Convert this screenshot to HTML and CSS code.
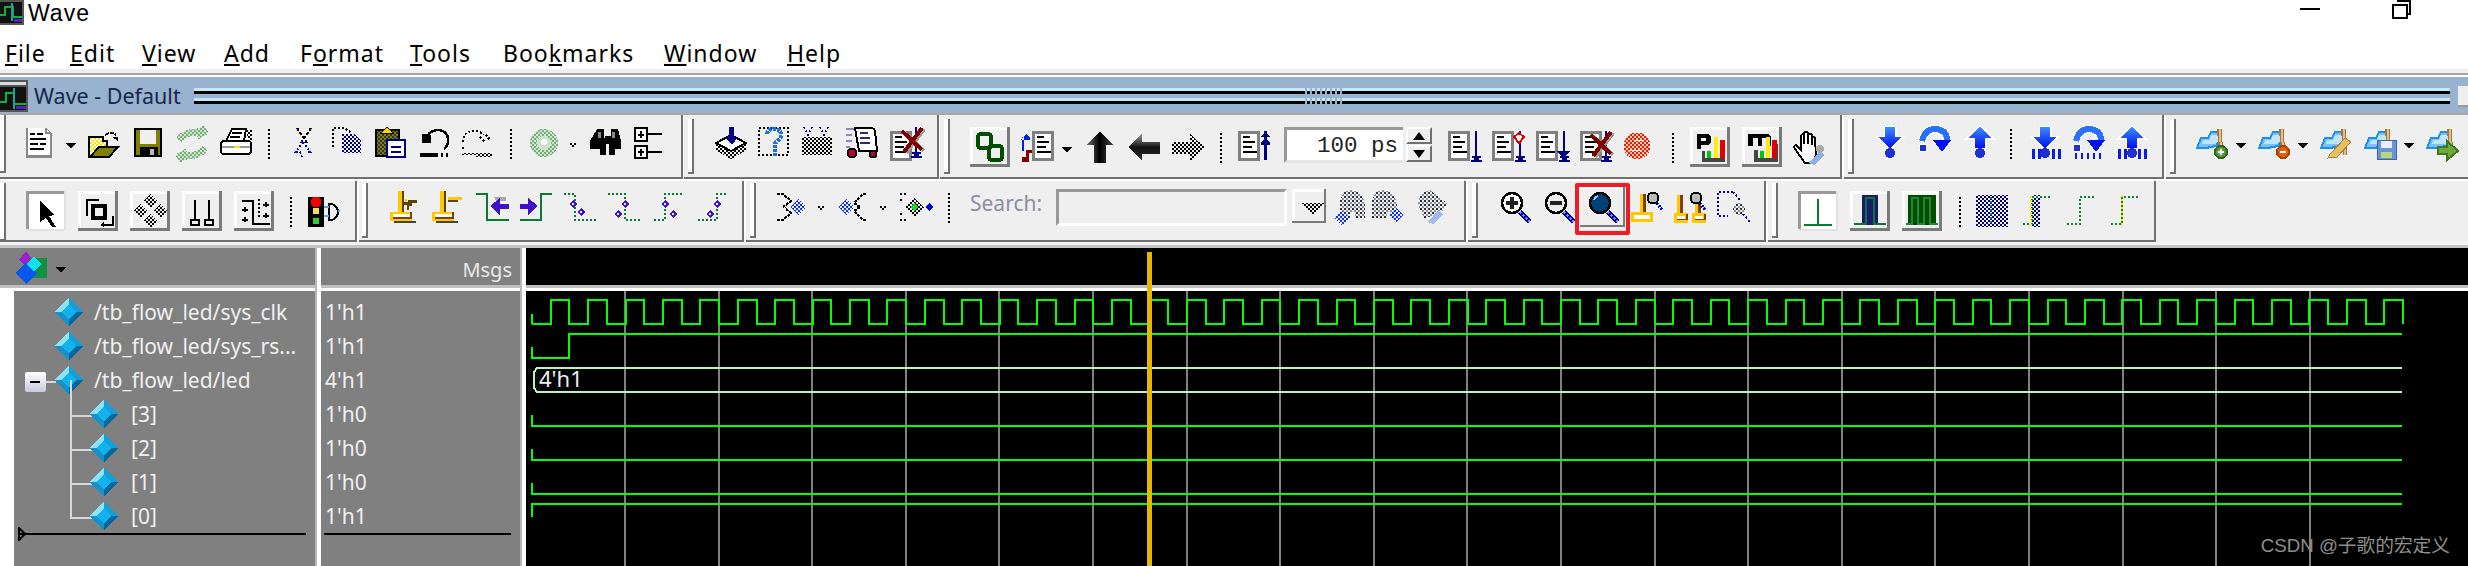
FILE: index.html
```html
<!DOCTYPE html>
<html lang="en">
<head>
    <meta charset="UTF-8">
    <title>Wave</title>
    <link rel="stylesheet" href="styles.css">
</head>
<body>
<svg class="defs" width="0" height="0">
    <defs>
        <pattern id="ck-k" width="4" height="4" patternUnits="userSpaceOnUse"><path d="M0 0h2v2H0zM2 2h2v2H2z" fill="#000"/></pattern>
        <pattern id="ck-g" width="4" height="4" patternUnits="userSpaceOnUse"><path d="M0 0h2v2H0zM2 2h2v2H2z" fill="#78b078"/><path d="M2 0h2v2H2zM0 2h2v2H0z" fill="#d0e4d0"/></pattern>
        <pattern id="ck-n" width="4" height="4" patternUnits="userSpaceOnUse"><path d="M0 0h2v2H0zM2 2h2v2H2z" fill="#000080"/></pattern>
        <pattern id="ck-b" width="4" height="4" patternUnits="userSpaceOnUse"><path d="M0 0h2v2H0zM2 2h2v2H2z" fill="#1030ff"/></pattern>
        <pattern id="ck-r" width="4" height="4" patternUnits="userSpaceOnUse"><path d="M0 0h2v2H0zM2 2h2v2H2z" fill="#e02000"/><path d="M2 0h2v2H2zM0 2h2v2H0z" fill="#f8c8b8"/></pattern>
        <pattern id="ck-y" width="4" height="4" patternUnits="userSpaceOnUse"><rect width="4" height="4" fill="#fff"/><path d="M0 0h2v2H0zM2 2h2v2H2z" fill="#ffe600"/></pattern>
        <pattern id="ck-o" width="4" height="4" patternUnits="userSpaceOnUse"><rect width="4" height="4" fill="#808000"/><path d="M0 0h2v2H0zM2 2h2v2H2z" fill="#333"/></pattern>
        <pattern id="ck-s" width="4" height="4" patternUnits="userSpaceOnUse"><path d="M0 0h2v2H0z" fill="#333"/><path d="M2 2h2v2H2z" fill="#8a94a4"/></pattern>
        <linearGradient id="gr-h"><stop offset="0" stop-color="#777"/><stop offset=".5" stop-color="#000"/><stop offset="1" stop-color="#444"/></linearGradient>
        <linearGradient id="gr-v" x2="0" y2="1"><stop offset="0" stop-color="#999"/><stop offset=".5" stop-color="#111"/><stop offset="1" stop-color="#333"/></linearGradient>
        <linearGradient id="gr-b" x2="0" y2="1"><stop offset="0" stop-color="#3c8cff"/><stop offset="1" stop-color="#0010f0"/></linearGradient>

        <path id="dd" d="M0 0h10L5 6z"/>
        <path id="ddv" d="M0 0h2v2h2V0h2v2H4v2H2V2H0z"/>
        <path id="sep" d="M1 0v30" stroke="#000" stroke-width="2" stroke-dasharray="2 2" fill="none"/>
        <g id="btn">
            <rect width="40" height="40" fill="#7a7a7a"/>
            <rect width="37" height="37" fill="#fff"/>
            <rect x="3" y="3" width="34" height="34" fill="#efefef"/>
        </g>
        <g id="btn-in">
            <rect width="40" height="40" fill="#e2e2e2"/>
            <rect width="38" height="38" fill="#999"/>
            <rect x="3" y="3" width="35" height="35" fill="#fff"/>
        </g>
        <g id="doc">
            <rect width="22" height="30" fill="#808080"/>
            <rect x="3" y="3" width="16" height="24" fill="#fff"/>
            <path d="M5 5h7v2H5zM5 10h12v2H5zM5 15h9v2H5zM5 20h14v2H5z" fill="#000"/>
        </g>
        <g id="cross">
            <path d="M0 3 20 22M20 0 2 24" stroke="#999" stroke-width="4" transform="translate(2 1)"/>
            <path d="M0 3 20 22M20 0 2 24" stroke="#800000" stroke-width="4"/>
        </g>
        <path id="pin" d="M3 0h2v25h4v2H7v2h3v2H-1v-2h3v-2H0v-2h3z" fill="#000080"/>
        <path id="dia" d="M0-4 4 0 0 4-4 0zM0-1.500-1.500 0 0 1.500 1.500 0z" fill="#4010cc" fill-rule="evenodd"/>
        <path id="dot-dia" d="M0-7 7 0 0 7-7 0z" fill="url(#ck-k)"/>
        <g id="diamond">
            <path d="M14 0 28 15 14 30 0 15z" fill="#12b2ee"/>
            <path d="M14 0 0 15H7L14 7z" fill="#8de2f8"/>
            <path d="M14 0 28 15H21L14 7z" fill="#139fdb"/>
            <path d="M0 15 14 30V23L7 15z" fill="#1392cc"/>
            <path d="M28 15 14 30V23L21 15z" fill="#07679b"/>
        </g>
        <g id="hmark">
            <path d="M1 20 5 10H12L15 4H24V12L20 18 10 20z" fill="#7cc0f8" stroke="#1a90f0" stroke-width="2"/>
            <path d="M7 12h6l2-5h7v6l-3 3H6z" fill="#bfe4fb"/>
            <path d="M21 1h5l1 26h-4z" fill="#a8763a"/>
            <path d="M23 1h2l1 26h-2z" fill="#e3c08a"/>
        </g>
        <g id="yman">
            <rect x="8" width="4" height="22" fill="#ffc800"/>
            <rect x="12" width="2" height="22" fill="#5a4400"/>
            <rect y="21" width="22" height="9" fill="#ffc800"/>
            <rect x="3" y="23" width="17" height="5" fill="#fff"/>
            <path d="M3 28h19v-7h-2v5H3z" fill="#804000"/>
            <rect x="4" y="30" width="22" height="2" fill="#444"/>
        </g>
        <g id="mini-y">
            <rect x="6" width="3" height="18" fill="#804000"/>
            <rect x="0" y="18" width="14" height="10" fill="#ffc800"/>
            <rect x="3" y="21" width="8" height="4" fill="#fff"/>
            <path d="M3 25h11v-6h-2v5H3z" fill="#804000"/>
            <rect x="3" width="3" height="18" fill="#ffc800"/>
        </g>
        <g id="mag">
            <circle cx="6" cy="6" r="5.500" fill="#bbb" stroke="#000" stroke-width="2"/>
            <path d="M10 11l5 7" stroke="#0000d0" stroke-width="3" stroke-dasharray="2 1"/>
        </g>
        <g id="zoom-h">
            <path d="M19 20l10 10" stroke="#0000a0" stroke-width="5"/>
            <path d="M19 20l10 10" stroke="#6f8fff" stroke-width="2" stroke-dasharray="2 2"/>
        </g>
        <g id="arrow-dn">
            <path d="M7 0h10v10h7L12 21 0 10h7z" fill="#fff" stroke="#fff" stroke-width="3"/>
            <path d="M7 0h10v10h7L12 21 0 10h7z" fill="url(#gr-b)"/>
        </g>
        <g id="arrow-up">
            <path d="M12 0 24 11H17V21H7V11H0z" fill="#fff" stroke="#fff" stroke-width="3"/>
            <path d="M12 0 24 11H17V21H7V11H0z" fill="url(#gr-b)"/>
        </g>
        <g id="arrow-ov">
            <path d="M4 14Q7 1 19 2 29 4 29 13" fill="none" stroke="#fff" stroke-width="8"/>
            <path d="M4 14Q7 1 19 2 29 4 29 13" fill="none" stroke="#2a70ff" stroke-width="6"/>
            <path d="M15 13H33L24 25z" fill="#0010f0"/>
            <circle cx="5" cy="21" r="4" fill="#2030d0" stroke="#fff"/>
        </g>
        <path id="bars" d="M0 0h3v10H0zM6 0h3v10H6zM20 0h3v10h-3zM26 0h3v10h-3z" fill="#0a1ce0"/>
        <!-- ten clock periods -->
        <path id="clk10" class="trace" d="M0 324
            h18.71v-24h18.71v24
            h18.71v-24h18.71v24
            h18.71v-24h18.71v24
            h18.71v-24h18.71v24
            h18.71v-24h18.71v24
            h18.71v-24h18.71v24
            h18.71v-24h18.71v24
            h18.71v-24h18.71v24
            h18.71v-24h18.71v24
            h18.71v-24h18.71v24"/>
    </defs>
</svg>

<div class="win">
    <div class="titlebar">
        <svg class="ic" width="28" height="26" viewBox="0 0 28 26">
            <rect width="24" height="25" fill="#555"/><rect y="2" width="22" height="21" fill="#111"/>
            <path d="M0 15h5V7h8v10h9" fill="none" stroke="#10b040" stroke-width="2"/>
            <path d="M12 3v18" stroke="#20a0a0" stroke-width="2"/><path d="M14 20h8" stroke="#5020c0" stroke-width="3"/>
        </svg>
        <span class="title-text">Wave</span>
        <span class="caption-min"></span>
        <svg class="caption-max" width="20" height="20" viewBox="0 0 20 20">
            <path d="M5 1h13v13h-3" fill="none" stroke="#000" stroke-width="1.500"/>
            <rect x="1" y="5" width="14" height="13" fill="#fff" stroke="#000" stroke-width="2"/>
        </svg>
    </div>
    <div class="menubar">
        <span><u>F</u>ile</span>
        <span><u>E</u>dit</span>
        <span><u>V</u>iew</span>
        <span><u>A</u>dd</span>
        <span>F<u>o</u>rmat</span>
        <span><u>T</u>ools</span>
        <span>Boo<u>k</u>marks</span>
        <span><u>W</u>indow</span>
        <span><u>H</u>elp</span>
    </div>
    <div class="menu-edge"></div>

    <div class="dockbar">
        <svg class="ic" width="34" height="32" viewBox="0 0 34 32">
            <rect width="28" height="32" fill="#555"/><rect width="26" height="3" y="2" fill="#ddd"/><rect y="7" width="26" height="23" fill="#111"/>
            <path d="M0 22h6v-9h8v11h12" fill="none" stroke="#10b040" stroke-width="2"/>
            <path d="M14 8v21" stroke="#20a0a0" stroke-width="2"/><path d="M16 27h10" stroke="#5020c0" stroke-width="3"/>
        </svg>
        <span class="dock-title">Wave - Default</span>
        <span class="dock-lines dock-lines-a"></span>
        <span class="dock-dots"></span>
        <span class="dock-lines dock-lines-b"></span>
        <span class="dock-close"></span>
    </div>

    <!-- first toolbar row -->
    <div class="tbrow tbrow-top">
        <div class="tgroup">
            <span class="grip grip-first"></span>
            <svg class="ic" width="58" height="62" viewBox="6 115 58 62">
                <path d="M26 128h20l6 6v24H26z" fill="#888"/><path d="M28 128h18l4 5v22H28z" fill="#fff"/>
                <path d="M46 128v5h4" fill="none" stroke="#888" stroke-width="2"/>
                <path d="M30 133h5v2h-5zM37 133h6v2h-6zM30 138h16v2H30zM30 143h8v2h-8zM40 143h6v2h-6zM30 148h14v2H30z"/>
            </svg>
            <svg class="ic" width="20" height="62" viewBox="64 115 20 62"><use href="#dd" x="66" y="143"/></svg>
            <svg class="ic" width="46" height="62" viewBox="84 115 46 62">
                <path d="M89 156v-19h14v4h4v15z" fill="url(#ck-y)" stroke="#000" stroke-width="2"/>
                <path d="M90 157l9-10h19l-9 10z" fill="#808000" stroke="#000" stroke-width="2"/>
                <path d="M105 135q6-4 11 0" fill="none" stroke="#000" stroke-width="2" stroke-dasharray="4 1"/>
                <path d="M112 137h6v4z"/>
            </svg>
            <svg class="ic" width="42" height="62" viewBox="130 115 42 62">
                <rect x="134" y="128" width="28" height="29"/><rect x="136" y="130" width="24" height="25" fill="#808000"/>
                <rect x="140" y="130" width="16" height="14" fill="#efefef"/><rect x="140" y="147" width="18" height="9"/><rect x="150" y="149" width="4" height="6" fill="#bbb"/>
            </svg>
            <svg class="ic" width="42" height="62" viewBox="172 115 42 62">
                <path d="M179 140q6-9 22-8M201 127l3 5-7 4M205 148q-6 9-22 8M183 161l-3-5 7-4" fill="none" stroke="url(#ck-g)" stroke-width="7"/>
            </svg>
            <svg class="ic" width="48" height="62" viewBox="214 115 48 62">
                <path d="M232 129h14l-2 12h-18z" fill="#fff" stroke="#000" stroke-width="2"/>
                <path d="M232 133h10M230 137h10" stroke="#000" stroke-width="2"/>
                <rect x="221" y="141" width="30" height="13" rx="3" fill="#fff" stroke="#000" stroke-width="2"/>
                <path d="M222 147h28" stroke="#999" stroke-width="2"/><rect x="234" y="146" width="6" height="2" fill="#ffd800"/>
                <path d="M246 130h6v12h-3z" fill="url(#ck-k)"/>
            </svg>
            <svg class="ic" width="28" height="62" viewBox="262 115 28 62"><use href="#sep" x="268" y="129"/></svg>
            <svg class="ic" width="35" height="62" viewBox="290 115 35 62">
                <path d="M297 128l10 15M311 128l-10 15" stroke="#000" stroke-width="2" stroke-dasharray="3 2"/>
                <path d="M303 142l-7 10h4l2 5M303 142l7 10h-4" fill="none" stroke="#0000e0" stroke-width="2" stroke-dasharray="2 2"/>
            </svg>
            <svg class="ic" width="45" height="62" viewBox="325 115 45 62">
                <path d="M333 147v-19h12l6 5" fill="none" stroke="#000" stroke-width="2" stroke-dasharray="2 2"/>
                <path d="M342 134h12l7 7v12h-19z" fill="url(#ck-n)"/>
            </svg>
            <svg class="ic" width="44" height="62" viewBox="370 115 44 62">
                <rect x="376" y="130" width="23" height="26" fill="url(#ck-o)" stroke="#000" stroke-width="2"/>
                <path d="M381 133l6-6 6 6z" fill="#ffd800" stroke="#000"/>
                <rect x="387" y="140" width="18" height="17" fill="#fff" stroke="#000080" stroke-width="2"/>
                <path d="M391 146h10v2h-10zM391 151h10v2h-10z" fill="#000080"/>
            </svg>
            <svg class="ic" width="44" height="62" viewBox="414 115 44 62">
                <path d="M428 135q3-5 11-5 9 1 9 10 0 6-4 9" fill="none" stroke="#000" stroke-width="2.500"/>
                <path d="M422 134l9 1v8h-9z"/><rect x="420" y="153" width="18" height="4"/><path d="M441 153h2v4h-2zM446 153h2v4h-2z"/>
            </svg>
            <svg class="ic" width="46" height="62" viewBox="458 115 46 62">
                <path d="M463 142q0-11 11-11 6 0 10 4M486 135l3 3-3 3M480 137l5 5M463 147v2" fill="none" stroke="#000" stroke-width="2" stroke-dasharray="2 2"/>
                <path d="M462 153h30v2h-30z" fill="url(#ck-k)"/><path d="M476 155h16v2h-16z" fill="url(#ck-k)"/>
            </svg>
            <svg class="ic" width="20" height="62" viewBox="504 115 20 62"><use href="#sep" x="510" y="129"/></svg>
            <svg class="ic" width="42" height="62" viewBox="524 115 42 62">
                <circle cx="544" cy="143" r="14" fill="url(#ck-g)"/><circle cx="544" cy="143" r="7" fill="#cfe2cf"/><circle cx="544" cy="142" r="3" fill="#fff"/>
            </svg>
            <svg class="ic" width="18" height="62" viewBox="566 115 18 62"><use href="#ddv" x="570" y="143"/></svg>
            <svg class="ic" width="44" height="62" viewBox="584 115 44 62">
                <path d="M597 129h7v9h2v17h-6v-6h-10v-8zM618 129h-7v9h-2v17h6v-6h6v-8z"/>
                <path d="M605 136h6v8h-6z"/><path d="M598 132h3v6h-3zM612 132h3v6h-3z" fill="#888"/>
            </svg>
            <svg class="ic" width="53" height="62" viewBox="628 115 53 62">
                <rect x="635" y="128" width="12" height="13" fill="#fff" stroke="#000" stroke-width="2"/><path d="M647 133h15v2h-15zM640 131h2v7h-2zM638 134h6v2h-6z"/>
                <rect x="635" y="146" width="12" height="12" fill="#fff" stroke="#000" stroke-width="2"/><path d="M647 151h15v2h-15zM640 149h2v7h-2zM638 151h6v2h-6z"/>
            </svg>
        </div>

        <div class="tgroup gap-1">
            <span class="grip"></span>
            <svg class="ic" width="58" height="62" viewBox="694 115 58 62">
                <path d="M716 143l15-8 15 8-15 8z" fill="#fff" stroke="#000" stroke-width="2"/>
                <path d="M716 144l15 8 15-8v7l-15 8-15-8z" fill="url(#ck-k)"/>
                <path d="M729 127h5v10h4l-6 8-7-8h4z" fill="#000080"/>
            </svg>
            <svg class="ic" width="44" height="62" viewBox="752 115 44 62">
                <rect x="759" y="128" width="29" height="27" fill="none" stroke="#000" stroke-width="2" stroke-dasharray="2 2"/>
                <path d="M767 134q1-5 7-5 7 0 7 6 0 4-6 8v13" fill="none" stroke="#1a70e0" stroke-width="4" stroke-dasharray="3 1"/>
            </svg>
            <svg class="ic" width="44" height="62" viewBox="796 115 44 62">
                <rect x="802" y="137" width="30" height="18" fill="url(#ck-k)"/>
                <path d="M804 127l4 8 4-8M820 127l4 8 4-8" fill="none" stroke="#000080" stroke-width="2" stroke-dasharray="2 2"/>
            </svg>
            <svg class="ic" width="44" height="62" viewBox="840 115 44 62">
                <path d="M846 128h8v2h-8zM846 134h6v2h-6zM846 140h6v2h-6zM846 146h4v2h-4z" fill="#8a8ab8"/>
                <path d="M855 128h16q3 0 4 3l2 20h-18z" fill="#fff" stroke="#000" stroke-width="2"/>
                <path d="M860 132h8v2h-8zM860 137h10v2h-10zM860 142h10v2h-10z" fill="#2a2a70"/>
                <circle cx="852" cy="153" r="4.500" fill="#c00030" stroke="#000" stroke-width="2"/><circle cx="873" cy="154" r="3.500" fill="#c00030" stroke="#000" stroke-width="2"/>
            </svg>
            <svg class="ic" width="53" height="62" viewBox="884 115 53 62">
                <use href="#doc" x="890" y="131"/><use href="#pin" x="912" y="127"/><use href="#cross" x="902" y="128"/>
            </svg>
        </div>

        <div class="tgroup gap-1">
            <span class="grip"></span>
            <svg class="ic" width="66" height="62" viewBox="950 115 66 62">
                <use href="#btn" x="970" y="127"/>
                <rect x="978" y="134" width="13" height="14" rx="3" fill="none" stroke="#004d00" stroke-width="4"/>
                <rect x="989" y="146" width="13" height="14" rx="3" fill="none" stroke="#004d00" stroke-width="4"/>
            </svg>
            <svg class="ic" width="42" height="62" viewBox="1016 115 42 62">
                <use href="#doc" x="1032" y="131"/>
                <path d="M1022 137h2v14h-2zM1020 140h10v-2l-4-4-2 2z" fill="#0020e0"/>
                <path d="M1022 162v-5h4v-7h6v3h-3v9z" fill="#800000"/>
            </svg>
            <svg class="ic" width="20" height="62" viewBox="1058 115 20 62"><use href="#dd" x="1062" y="147"/></svg>
            <svg class="ic" width="42" height="62" viewBox="1078 115 42 62"><path d="M1100 131l13 14h-7v18h-12v-18h-8z" fill="url(#gr-h)"/></svg>
            <svg class="ic" width="46" height="62" viewBox="1120 115 46 62"><path d="M1128 147l14-13v8h18v12h-18v7z" fill="url(#gr-v)"/></svg>
            <svg class="ic" width="46" height="62" viewBox="1166 115 46 62"><path d="M1172 142h18v-8l15 13-15 14v-7h-18z" fill="url(#ck-k)"/></svg>
            <svg class="ic" width="18" height="62" viewBox="1212 115 18 62"><use href="#sep" x="1220" y="133"/></svg>
            <svg class="ic" width="54" height="62" viewBox="1230 115 54 62">
                <use href="#doc" x="1238" y="131"/>
                <path d="M1264 131h3v29h-3zM1261 137l4-5 5 5zM1261 143l4-5 5 5zM1261 143h9v2h-9z" fill="#000080"/>
            </svg>
            <div class="num-field">100 ps</div>
            <div class="spin">
                <span class="spin-btn"><i class="tri-up"></i></span>
                <span class="spin-btn"><i class="tri-down"></i></span>
            </div>
            <svg class="ic" width="54" height="62" viewBox="1432 115 54 62"><use href="#doc" x="1448" y="131"/><use href="#pin" x="1472" y="131"/></svg>
            <svg class="ic" width="44" height="62" viewBox="1486 115 44 62">
                <use href="#doc" x="1492" y="131"/><use href="#pin" x="1516" y="131"/>
                <path d="M1519 133l5 4-5 6-5-6z" fill="#fff" stroke="#e00000" stroke-width="2"/>
            </svg>
            <svg class="ic" width="44" height="62" viewBox="1530 115 44 62">
                <use href="#doc" x="1536" y="131"/><use href="#pin" x="1560" y="131"/>
                <path d="M1556 151h14l-7 7z" fill="#000080"/>
            </svg>
            <svg class="ic" width="44" height="62" viewBox="1574 115 44 62">
                <use href="#doc" x="1580" y="131"/><use href="#pin" x="1602" y="131"/><use href="#cross" x="1591" y="132"/>
            </svg>
            <svg class="ic" width="44" height="62" viewBox="1618 115 44 62">
                <circle cx="1637" cy="146" r="13.500" fill="url(#ck-r)"/><path d="M1634 140h10v1h-10zM1630 150h12v1h-12z" fill="#fff"/>
            </svg>
            <svg class="ic" width="20" height="62" viewBox="1662 115 20 62"><use href="#sep" x="1672" y="133"/></svg>
            <svg class="ic" width="54" height="62" viewBox="1682 115 54 62">
                <use href="#btn" x="1690" y="127"/>
                <path d="M1697 134h11l3 3v5l-3 3h-7v4h-4zM1701 138v3h5v-3z" fill-rule="evenodd"/>
                <path d="M1702 151h3v7h15v-14h5v18h-23z" fill="#444"/>
                <rect x="1707" y="151" width="4" height="7" fill="#00c800"/><rect x="1714" y="137" width="4" height="21" fill="#ffee00"/><rect x="1720" y="140" width="5" height="18" fill="#e00000"/>
            </svg>
            <svg class="ic" width="50" height="62" viewBox="1736 115 50 62">
                <use href="#btn" x="1742" y="127"/>
                <path d="M1748 134h20l3 3v9h-4v-8h-5v8h-4v-8h-5v8h-5z"/>
                <path d="M1754 150h4v8h17v-14h3v18h-24z" fill="#444"/>
                <rect x="1760" y="151" width="4" height="7" fill="#00c800"/><rect x="1766" y="137" width="4" height="21" fill="#ffee00"/><rect x="1772" y="140" width="5" height="18" fill="#e00000"/>
            </svg>
            <svg class="ic" width="54" height="62" viewBox="1786 115 54 62">
                <path d="M1805 163l-10-14q-2-3 1-4l5 5v-14q1-3 3-1v9-11q2-3 4 0v11-9q2-3 4 0v10-7q2-2 3 0l1 17-4 8z" fill="#fff" stroke="#000" stroke-width="2"/>
                <path d="M1809 163l11-12 4 4-10 10z" fill="#8ab0e8"/><circle cx="1820" cy="149" r="4" fill="#aaa"/>
            </svg>
        </div>

        <div class="tgroup gap-2">
            <span class="grip"></span>
            <svg class="ic" width="56" height="62" viewBox="1854 115 56 62"><use href="#arrow-dn" x="1878" y="127"/><circle cx="1890" cy="153" r="5" fill="#2030d0"/></svg>
            <svg class="ic" width="50" height="62" viewBox="1910 115 50 62"><use href="#arrow-ov" x="1918" y="127"/></svg>
            <svg class="ic" width="42" height="62" viewBox="1960 115 42 62"><use href="#arrow-up" x="1968" y="127"/><circle cx="1980" cy="153" r="5" fill="#2030d0"/></svg>
            <svg class="ic" width="20" height="62" viewBox="2002 115 20 62"><use href="#sep" x="2010" y="129"/></svg>
            <svg class="ic" width="44" height="62" viewBox="2022 115 44 62">
                <use href="#arrow-dn" x="2033" y="127"/><use href="#bars" x="2032" y="149"/><circle cx="2045" cy="153" r="5" fill="#2030d0"/>
            </svg>
            <svg class="ic" width="46" height="62" viewBox="2066 115 46 62">
                <use href="#arrow-ov" x="2072" y="127"/><path d="M2075 153v6h2v-6zM2081 153v6h2v-6zM2087 153v6h2v-6zM2093 153v6h2v-6zM2099 153v6h2v-6z" fill="#0a1ce0"/>
            </svg>
            <svg class="ic" width="50" height="62" viewBox="2112 115 50 62">
                <use href="#arrow-up" x="2120" y="127"/><use href="#bars" x="2118" y="149"/><circle cx="2132" cy="153" r="5" fill="#2030d0"/>
            </svg>
        </div>

        <div class="tgroup tgroup-open gap-2">
            <span class="grip"></span>
            <svg class="ic" width="56" height="62" viewBox="2176 115 56 62">
                <use href="#hmark" x="2196" y="128"/><circle cx="2221" cy="152" r="6" fill="#5a9a3a" stroke="#2d6a1a" stroke-width="2"/><path d="M2218 151h6v2h-6zM2220 149h2v6h-2z" fill="#fff"/>
            </svg>
            <svg class="ic" width="18" height="62" viewBox="2232 115 18 62"><use href="#dd" x="2236" y="143"/></svg>
            <svg class="ic" width="44" height="62" viewBox="2250 115 44 62">
                <use href="#hmark" x="2258" y="128"/><circle cx="2283" cy="152" r="6" fill="#e06010" stroke="#b04000" stroke-width="2"/><rect x="2280" y="151" width="6" height="2" fill="#fff"/>
            </svg>
            <svg class="ic" width="18" height="62" viewBox="2294 115 18 62"><use href="#dd" x="2298" y="143"/></svg>
            <svg class="ic" width="46" height="62" viewBox="2312 115 46 62">
                <use href="#hmark" x="2320" y="128"/><path d="M2331 157l-3 1 2-4 15-16 6 4-14 15z" fill="#e8c060" stroke="#b08040"/>
            </svg>
            <svg class="ic" width="42" height="62" viewBox="2358 115 42 62">
                <use href="#hmark" x="2364" y="128"/><rect x="2377" y="140" width="19" height="19" fill="#6b93d6" stroke="#3a66b0"/><rect x="2381" y="141" width="11" height="7" fill="#e8f0ff"/><rect x="2381" y="152" width="11" height="6" fill="#b8d880"/>
            </svg>
            <svg class="ic" width="18" height="62" viewBox="2400 115 18 62"><use href="#dd" x="2404" y="143"/></svg>
            <svg class="ic" width="50" height="62" viewBox="2418 115 50 62">
                <use href="#hmark" x="2426" y="128"/><path d="M2438 147h9v-6l11 10-11 9v-6h-9z" fill="#6ea83e" stroke="#3f7a18" stroke-width="2"/>
            </svg>
        </div>
    </div>

    <!-- second toolbar row -->
    <div class="tbrow tbrow-low">
        <div class="tgroup">
            <span class="grip grip-first"></span>
            <svg class="ic" width="66" height="59" viewBox="6 181 66 59">
                <use href="#btn-in" x="26" y="191"/>
                <path d="M40 201l14 14-5 1 7 11h-4l-6-9-6 4z"/>
            </svg>
            <svg class="ic" width="52" height="59" viewBox="72 181 52 59">
                <use href="#btn" x="78" y="191"/>
                <path d="M99 200H87v16" fill="none" stroke="#000" stroke-width="2"/>
                <rect x="93" y="206" width="12" height="12" fill="none" stroke="#000" stroke-width="4"/>
                <path d="M101 226h13v-10h-2v8h-11zM104 221l-3 4 3 3z"/>
            </svg>
            <svg class="ic" width="52" height="59" viewBox="124 181 52 59">
                <use href="#btn" x="130" y="191"/>
                <use href="#dot-dia" x="150" y="201"/><use href="#dot-dia" x="140" y="211"/><use href="#dot-dia" x="160" y="211"/><use href="#dot-dia" x="150" y="221"/>
            </svg>
            <svg class="ic" width="52" height="59" viewBox="176 181 52 59">
                <use href="#btn" x="182" y="191"/>
                <path d="M194 200h2v20h-2zM208 200h2v20h-2z"/>
                <path d="M191 220h8v5h-8zM205 220h8v5h-8z" fill="none" stroke="#000" stroke-width="2"/>
            </svg>
            <svg class="ic" width="54" height="59" viewBox="228 181 54 59">
                <use href="#btn" x="234" y="191"/>
                <path d="M242 201h11v23h17" fill="none" stroke="#000" stroke-width="2"/>
                <path d="M244 207h2v5h-2zM242 209h6v2h-6zM244 217h2v5h-2zM242 219h6v2h-6zM265 202h2v5h-2zM263 204h6v2h-6zM265 213h2v5h-2zM263 215h6v2h-6z"/>
                <path d="M259 199v20" stroke="#000" stroke-width="2" stroke-dasharray="2 2"/>
            </svg>
            <svg class="ic" width="18" height="59" viewBox="282 181 18 59"><use href="#sep" x="290" y="197"/></svg>
            <svg class="ic" width="55" height="59" viewBox="300 181 55 59">
                <rect x="308" y="197" width="16" height="30"/><circle cx="316" cy="202" r="5.500" fill="#f00000"/>
                <rect x="313" y="208" width="6" height="6" fill="#e8e060"/><rect x="313" y="218" width="6" height="6" fill="#30d030"/>
                <path d="M329 204h3q6 3 6 8t-6 8h-3z" fill="none" stroke="#000" stroke-width="2"/>
                <path d="M324 207h5M324 216h5M338 211h2" stroke="#60a8d0" stroke-width="2"/>
            </svg>
        </div>

        <div class="tgroup gap-2">
            <span class="grip grip-narrow"></span>
            <svg class="ic" width="58" height="59" viewBox="368 181 58 59">
                <use href="#yman" x="390" y="191"/>
                <path d="M408 200h9v3h-5v3h-3v4h-2v-5h-3v-3h4z" fill="#5a4400"/><path d="M405 199h2v3h-2z" fill="#ffc800"/>
            </svg>
            <svg class="ic" width="44" height="59" viewBox="426 181 44 59">
                <use href="#yman" x="432" y="191"/><rect x="448" y="197" width="14" height="3" fill="#ffc800"/><rect x="448" y="200" width="10" height="2" fill="#5a4400"/>
            </svg>
            <svg class="ic" width="44" height="59" viewBox="470 181 44 59">
                <path d="M476 194h11v26h22" fill="none" stroke="#0a7a33" stroke-width="2"/>
                <path d="M494 197h12v4h-10z" fill="#aaa"/><path d="M490 206l10-8v6h9v5h-9v6z" fill="#4010cc"/>
            </svg>
            <svg class="ic" width="44" height="59" viewBox="514 181 44 59">
                <path d="M552 194h-11v26h-21" fill="none" stroke="#0a7a33" stroke-width="2"/>
                <path d="M538 206l-10-8v6h-8v5h8v6z" fill="#4010cc"/>
            </svg>
            <svg class="ic" width="44" height="59" viewBox="558 181 44 59">
                <path d="M564 194h11v26h21" fill="none" stroke="#0a7a33" stroke-width="2" stroke-dasharray="2 2"/>
                <use href="#dia" x="573" y="204"/><use href="#dia" x="581" y="212"/>
            </svg>
            <svg class="ic" width="46" height="59" viewBox="602 181 46 59">
                <path d="M608 194h17v26h15" fill="none" stroke="#0a7a33" stroke-width="2" stroke-dasharray="2 2"/>
                <use href="#dia" x="625" y="204"/><use href="#dia" x="618" y="214"/>
            </svg>
            <svg class="ic" width="44" height="59" viewBox="648 181 44 59">
                <path d="M654 220h11v-26h17" fill="none" stroke="#0a7a33" stroke-width="2" stroke-dasharray="2 2"/>
                <use href="#dia" x="665" y="204"/><use href="#dia" x="673" y="214"/>
            </svg>
            <svg class="ic" width="50" height="59" viewBox="692 181 50 59">
                <path d="M698 220h19v-26h9" fill="none" stroke="#0a7a33" stroke-width="2" stroke-dasharray="2 2"/>
                <use href="#dia" x="717" y="204"/><use href="#dia" x="710" y="214"/>
            </svg>
        </div>

        <div class="tgroup gap-2">
            <span class="grip"></span>
            <svg class="ic" width="56" height="59" viewBox="756 181 56 59">
                <path d="M777 194h6l8 7-8 6M777 220h6l8-7-6-5" fill="none" stroke="#000" stroke-width="2" stroke-dasharray="3 1"/>
                <path d="M798 199l8 8-8 8-8-8z" fill="url(#ck-b)"/>
            </svg>
            <svg class="ic" width="20" height="59" viewBox="812 181 20 59"><use href="#ddv" x="818" y="206"/></svg>
            <svg class="ic" width="42" height="59" viewBox="832 181 42 59">
                <path d="M866 194h-3l-9 9 6 4M866 220h-3l-9-9 6-4" fill="none" stroke="#000" stroke-width="2" stroke-dasharray="3 1"/>
                <path d="M846 199l8 8-8 8-8-8z" fill="url(#ck-b)"/>
            </svg>
            <svg class="ic" width="18" height="59" viewBox="874 181 18 59"><use href="#ddv" x="880" y="206"/></svg>
            <svg class="ic" width="48" height="59" viewBox="892 181 48 59">
                <path d="M900 194h6M900 220h6M900 200h4M900 214h4" stroke="#000" stroke-width="2" stroke-dasharray="2 2"/>
                <path d="M914 198l10 9-10 10-10-10z" fill="url(#ck-k)"/><path d="M914 203l4 4-4 4-4-4z" fill="#10e030"/>
                <path d="M929 203l4 4-4 4-4-4z" fill="#0000e0"/>
            </svg>
            <svg class="ic" width="20" height="59" viewBox="940 181 20 59"><use href="#sep" x="948" y="193"/></svg>
            <span class="search-label">Search:</span>
            <div class="search-box"></div>
            <svg class="ic" width="43" height="59" viewBox="1287 181 43 59">
                <rect x="1292" y="189" width="34" height="34" fill="#7a7a7a"/><rect x="1292" y="189" width="32" height="32" fill="#fff"/><rect x="1295" y="192" width="29" height="29" fill="#efefef"/>
                <path d="M1300 203h24l-12 12z" fill="url(#ck-k)"/>
            </svg>
            <svg class="ic" width="38" height="59" viewBox="1330 181 38 59">
                <path d="M1340 204q1-14 11-14 11 1 14 14v14h-10v-6h-5v6h-10z" fill="url(#ck-s)"/>
                <path d="M1342 211l8 7-8 8-8-8z" fill="url(#ck-b)"/>
            </svg>
            <svg class="ic" width="42" height="59" viewBox="1368 181 42 59">
                <path d="M1372 204q1-14 11-14 11 1 14 14v8h-10v6h-15z" fill="url(#ck-s)"/>
                <path d="M1396 207l7 8-7 8-8-8z" fill="url(#ck-b)"/>
            </svg>
            <svg class="ic" width="54" height="59" viewBox="1410 181 54 59">
                <path d="M1418 204q1-12 12-14l18 14-8 10-16 4z" fill="url(#ck-s)"/>
                <path d="M1428 222l10-12 5 4-10 10z" fill="#a0b8f0"/>
            </svg>
        </div>

        <div class="tgroup gap-2">
            <span class="grip"></span>
            <svg class="ic" width="60" height="59" viewBox="1478 181 60 59">
                <use href="#zoom-h" x="1501" y="192"/><circle cx="1512" cy="203" r="10" fill="#fff" stroke="#000" stroke-width="2.500"/>
                <path d="M1510 197h4v4h4v4h-4v4h-4v-4h-4v-4h4z" fill="#222"/>
            </svg>
            <svg class="ic" width="42" height="59" viewBox="1538 181 42 59">
                <use href="#zoom-h" x="1545" y="192"/><circle cx="1556" cy="203" r="10" fill="#ececec" stroke="#000" stroke-width="2.500"/>
                <rect x="1550" y="201" width="12" height="4" fill="#222"/>
            </svg>
            <svg class="ic" width="45" height="59" viewBox="1580 181 45 59">
                <path d="M1580 226h44V187" fill="none" stroke="#7a7a7a" stroke-width="2"/><path d="M1580 188h42" stroke="#fff" stroke-width="2"/>
                <use href="#zoom-h" x="1589" y="192"/><circle cx="1600" cy="203" r="10" fill="#00417a" stroke="#000" stroke-width="2.500"/>
                <path d="M1594 200q1-3 4-4" stroke="#9ac8ff" stroke-width="2" fill="none"/>
            </svg>
            <svg class="ic" width="43" height="59" viewBox="1625 181 43 59">
                <use href="#mini-y" x="1637" y="194"/><rect x="1631" y="212" width="22" height="10" fill="#ffc800"/><rect x="1634" y="215" width="16" height="4" fill="#fff"/><use href="#mag" x="1647" y="192"/>
            </svg>
            <svg class="ic" width="44" height="59" viewBox="1668 181 44 59">
                <use href="#mini-y" x="1674" y="195"/><use href="#mini-y" x="1692" y="195"/><use href="#mag" x="1690" y="192"/>
            </svg>
            <svg class="ic" width="52" height="59" viewBox="1712 181 52 59">
                <path d="M1733 192h-15v24h10" fill="none" stroke="#000080" stroke-width="2" stroke-dasharray="2 2"/><path d="M1733 192l7 8" stroke="#000080" stroke-width="2" stroke-dasharray="2 2"/>
                <circle cx="1739" cy="209" r="6" fill="url(#ck-s)"/><path d="M1743 214l7 8" stroke="#0000d0" stroke-width="2" stroke-dasharray="2 2"/>
            </svg>
        </div>

        <div class="tgroup gap-2">
            <span class="grip"></span>
            <svg class="ic" width="66" height="59" viewBox="1778 181 66 59">
                <use href="#btn-in" x="1798" y="191"/><path d="M1817 199h2v25h13v2h-28v-2h13z" fill="#0a7a33"/>
            </svg>
            <svg class="ic" width="52" height="59" viewBox="1844 181 52 59">
                <use href="#btn" x="1850" y="191"/><rect x="1862" y="195" width="16" height="30" fill="#1a1a70"/>
                <path d="M1854 224h12v-26h8v26h12" fill="none" stroke="#0a7a33" stroke-width="2"/>
            </svg>
            <svg class="ic" width="54" height="59" viewBox="1896 181 54 59">
                <use href="#btn" x="1902" y="191"/><rect x="1908" y="195" width="28" height="30" fill="#004d00"/>
                <path d="M1906 224h6v-26h6v26h6v-26h6v26h8" fill="none" stroke="#1a8a3a" stroke-width="2"/>
            </svg>
            <svg class="ic" width="18" height="59" viewBox="1950 181 18 59"><use href="#sep" x="1959" y="197"/></svg>
            <svg class="ic" width="47" height="59" viewBox="1968 181 47 59">
                <rect x="1976" y="195" width="32" height="32" fill="url(#ck-n)"/><path d="M1991 197v28" stroke="#0a8a33" stroke-width="2" stroke-dasharray="2 2"/>
            </svg>
            <svg class="ic" width="45" height="59" viewBox="2015 181 45 59">
                <rect x="2032" y="195" width="8" height="32" fill="url(#ck-n)"/>
                <path d="M2050 197h-18v27h-10" fill="none" stroke="#0a8a33" stroke-width="2" stroke-dasharray="2 2"/>
                <path d="M2031 196v29" stroke="#ffee00" stroke-width="2" stroke-dasharray="2 2"/>
            </svg>
            <svg class="ic" width="44" height="59" viewBox="2060 181 44 59">
                <path d="M2094 197h-14v27h-14" fill="none" stroke="#0a8a33" stroke-width="2" stroke-dasharray="2 2"/>
            </svg>
            <svg class="ic" width="50" height="59" viewBox="2104 181 50 59">
                <path d="M2138 197h-16v27h-12" fill="none" stroke="#0a8a33" stroke-width="2" stroke-dasharray="2 2"/>
                <path d="M2122 195v30" stroke="#ffee00" stroke-width="2" stroke-dasharray="2 2"/>
            </svg>
        </div>
        <div class="tb-blank"></div>
    </div>
    <div class="tb-end"></div>

    <div class="panes">
        <div class="col col-names">
            <div class="col-head">
                <svg class="ic" width="66" height="37" viewBox="0 248 66 37">
                    <path d="M26 251l7 9-7 7-7-7z" fill="#a020d0"/>
                    <rect x="30" y="258" width="17" height="20" fill="#109040"/>
                    <path d="M26 262l11 11-11 11-10-11z" fill="#0858f0"/>
                    <path d="M34 256l7 8-7 8-7-8z" fill="#10e0f0"/>
                    <use href="#dd" x="56" y="267"/>
                </svg>
            </div>
            <div class="col-body">
                <div class="sig-list">
                    <div class="sig"><svg class="gem" width="29" height="30" viewBox="0 0 29 30"><use href="#diamond"/></svg><span>/tb_flow_led/sys_clk</span></div>
                    <div class="sig"><svg class="gem" width="29" height="30" viewBox="0 0 29 30"><use href="#diamond"/></svg><span>/tb_flow_led/sys_rs...</span></div>
                    <div class="sig sig-open"><span class="twisty"></span><svg class="gem" width="29" height="30" viewBox="0 0 29 30"><use href="#diamond"/></svg><span>/tb_flow_led/led</span></div>
                    <div class="sig sig-child"><svg class="gem" width="29" height="30" viewBox="0 0 29 30"><use href="#diamond"/></svg><span>[3]</span></div>
                    <div class="sig sig-child"><svg class="gem" width="29" height="30" viewBox="0 0 29 30"><use href="#diamond"/></svg><span>[2]</span></div>
                    <div class="sig sig-child"><svg class="gem" width="29" height="30" viewBox="0 0 29 30"><use href="#diamond"/></svg><span>[1]</span></div>
                    <div class="sig sig-child"><svg class="gem" width="29" height="30" viewBox="0 0 29 30"><use href="#diamond"/></svg><span>[0]</span></div>
                </div>
                <div class="list-end list-end-names">
                    <svg class="end-mark" width="8" height="14" viewBox="0 0 8 14"><path d="M1 1l6 6-6 6z" fill="none" stroke="#000" stroke-width="2"/></svg>
                </div>
            </div>
        </div>
        <div class="sash"></div>
        <div class="col col-vals">
            <div class="col-head col-head-msgs">Msgs</div>
            <div class="col-body">
                <div class="sig-list">
                    <div class="val">1'h1</div>
                    <div class="val">1'h1</div>
                    <div class="val">4'h1</div>
                    <div class="val">1'h0</div>
                    <div class="val">1'h0</div>
                    <div class="val">1'h0</div>
                    <div class="val">1'h1</div>
                </div>
                <div class="list-end list-end-vals"></div>
            </div>
        </div>
        <div class="sash"></div>
        <div class="col col-wave">
            <div class="col-head"></div>
            <div class="col-body">
                <svg class="wave" width="1942" height="275" viewBox="526 291 1942 275">
                    <path d="M625 291v275m93.600-275v275m93.600-275v275m93.600-275v275m93.600-275v275m93.600-275v275m93.600-275v275m93.600-275v275m93.600-275v275m93.600-275v275m93.600-275v275m93.600-275v275m93.600-275v275m93.600-275v275m93.600-275v275m93.600-275v275m93.600-275v275m93.600-275v275m93.600-275v275" fill="none" stroke="#808080" stroke-width="2"/>
                    <path class="trace" d="M532 314v10"/>
                    <use href="#clk10" x="532"/>
                    <use href="#clk10" x="906.200"/>
                    <use href="#clk10" x="1280.400"/>
                    <use href="#clk10" x="1654.600"/>
                    <use href="#clk10" x="2028.800"/>
                    <path class="trace" d="M532 347v11h37v-24h1833"/>
                    <path class="trace-bus" d="M2402 368H537l-3 4v16l3 4H2402"/>
                    <text class="bus-label" x="539" y="387">4'h1</text>
                    <path class="trace" d="M532 415v11h1870M532 449v11h1870M532 483v11h1870M532 517v-13h1870"/>
                </svg>
                <div class="watermark">CSDN @子歌的宏定义</div>
            </div>
            <div class="cursor"></div>
        </div>
    </div>

    <div class="redbox"></div>
</div>
</body>
</html>
```

FILE: styles.css
```css
* {
    box-sizing: border-box;
}

body {
    margin: 0;
    background: #fff;
    font-family: "Noto Sans", "Liberation Sans", sans-serif;
    overflow: hidden;
}

.defs {
    display: block;
}

.win {
    position: relative;
    width: 2468px;
    height: 566px;
    overflow: hidden;
    background: #fff;
}

.ic {
    display: block;
    flex: none;
    shape-rendering: crispEdges;
}

/* title and menu */
.titlebar {
    display: flex;
    height: 40px;
    color: #000;
}

.title-text {
    font-family: "Liberation Sans", sans-serif;
    font-size: 23px;
    letter-spacing: 1px;
    line-height: 26px;
}

.caption-min {
    width: 20px;
    height: 2px;
    margin: 8px 0 0 auto;
    background: #000;
}

.caption-max {
    margin: 0 56px 0 72px;
    shape-rendering: crispEdges;
}

.menubar {
    display: grid;
    grid-template-columns: 65px 72px 82px 76px 110px 93px 161px 123px auto;
    height: 29px;
    padding-left: 5px;
    font-size: 23px;
    line-height: 26px;
    letter-spacing: 1px;
    color: #000;
}

.menu-edge {
    height: 8px;
    background: #f0f0f0;
    border-top: 4px solid #f0f0f0;
    border-bottom: 2px solid #fff;
    box-shadow: inset 0 -2px 0 #a8a8a8;
}

/* docked window title */
.dockbar {
    display: flex;
    align-items: center;
    height: 38px;
    padding-top: 2px;
    background: #98b2cf;
    border-bottom: 2px solid #a8a8a8;
}

.dock-title {
    width: 160px;
    font-size: 21.500px;
    line-height: 28px;
    color: #17264a;
    white-space: nowrap;
}

.dock-lines,
.dock-dots {
    height: 16px;
    background: linear-gradient(#c5e6f5 0 3px, #000 3px 6px, #98b2cf 6px 10px, #c5e6f5 10px 13px, #000 13px 16px);
}

.dock-lines-a {
    width: 1110px;
}

.dock-dots {
    width: 42px;
    background:
        repeating-linear-gradient(90deg, transparent 0 3px, #98b2cf 3px 5px),
        linear-gradient(#c5e6f5 0 3px, #000 3px 6px, #98b2cf 6px 10px, #c5e6f5 10px 13px, #000 13px 16px);
}

.dock-lines-b {
    width: 1108px;
}

.dock-close {
    width: 10px;
    height: 21px;
    margin-left: 8px;
    background: #efefef;
    border-bottom: 2px solid #999;
}

/* toolbars */
.tbrow {
    display: flex;
    background: #fff;
}

.tbrow-top {
    height: 64px;
}

.tbrow-low {
    height: 63px;
    padding-top: 2px;
}

.tgroup {
    display: flex;
    align-items: flex-start;
    flex: none;
    background: #efefef;
    border-right: 2px solid #707070;
    border-bottom: 2px solid #707070;
}

.tgroup-open {
    flex: 1;
    border-right: none;
}

.gap-1 {
    margin-left: 1px;
}

.gap-2 {
    margin-left: 2px;
}

.tb-blank {
    flex: 1;
    background: #efefef;
}

.tb-end {
    height: 6px;
    background: #f4f4f4;
    border-bottom: 3px solid #c4c4c4;
}

.grip {
    flex: none;
    width: 6px;
    height: 55px;
    margin: 4px 0 0 4px;
    background: #fff;
    border-right: 2px solid #707070;
    border-bottom: 2px solid #707070;
}

.tbrow-low .grip {
    margin-top: 2px;
}

.grip-first {
    margin-left: 0;
    margin-top: 0;
    height: 58px;
}

.grip-narrow {
    margin-left: 3px;
}

.num-field {
    flex: none;
    width: 119px;
    height: 36px;
    margin-top: 12px;
    padding-right: 5px;
    background: #fff;
    border-top: 3px solid #999;
    border-left: 3px solid #999;
    border-bottom: 3px solid #e4e4e4;
    font-family: "Liberation Mono", monospace;
    font-size: 22.500px;
    line-height: 32px;
    text-align: right;
    color: #222;
    white-space: pre;
}

.spin {
    display: flex;
    flex: none;
    flex-direction: column;
    gap: 1px;
    width: 26px;
    margin: 12px 0 0 3px;
}

.spin-btn {
    display: flex;
    align-items: center;
    justify-content: center;
    height: 17px;
    background: #efefef;
    border-top: 2px solid #fff;
    border-left: 2px solid #fff;
    border-right: 2px solid #707070;
    border-bottom: 2px solid #707070;
}

.tri-up,
.tri-down {
    width: 0;
    height: 0;
    border-left: 6px solid transparent;
    border-right: 6px solid transparent;
}

.tri-up {
    border-bottom: 8px solid #000;
}

.tri-down {
    border-top: 8px solid #000;
}

.search-label {
    flex: none;
    width: 96px;
    padding-left: 10px;
    font-size: 21px;
    line-height: 44px;
    color: #8d8d9f;
}

.search-box {
    flex: none;
    width: 231px;
    height: 37px;
    margin-top: 8px;
    border-top: 3px solid #999;
    border-left: 3px solid #999;
    border-right: 3px solid #fff;
    border-bottom: 3px solid #fff;
}

.redbox {
    position: absolute;
    left: 1575px;
    top: 183px;
    width: 55px;
    height: 52px;
    border: 4px solid #ee1c25;
    border-radius: 2px;
}

/* wave window */
.panes {
    display: flex;
    height: 318px;
}

.col {
    display: flex;
    flex: none;
    flex-direction: column;
}

.col-names {
    width: 315px;
}

.col-vals {
    width: 199px;
}

.col-wave {
    position: relative;
    flex: 1;
}

.sash {
    flex: none;
    width: 6px;
    background: #fff;
    border-left: 2px solid #b8b8b8;
}

.col-head {
    flex: none;
    height: 40px;
    margin-bottom: 3px;
    background: #808080;
    border-bottom: 3px solid #bfbfbf;
}

.col-head-msgs {
    padding-right: 8px;
    font-size: 20px;
    line-height: 44px;
    text-align: right;
    color: #e8e8e8;
}

.col-body {
    position: relative;
    flex: 1;
    background: #808080;
}

.col-names .col-body {
    margin-left: 14px;
}

.col-wave .col-head,
.col-wave .col-body {
    background: #000;
}

.sig-list {
    padding-top: 4px;
}

.sig,
.val {
    position: relative;
    height: 34px;
    font-size: 21px;
    line-height: 34px;
    color: #f0f0f0;
    white-space: nowrap;
}

.sig {
    display: flex;
    align-items: center;
    padding-left: 41px;
}

.sig .gem {
    position: relative;
    flex: none;
    margin-right: 10px;
    shape-rendering: crispEdges;
}

.sig-child {
    padding-left: 76px;
}

.sig-child .gem {
    margin-right: 12px;
}

.sig-child::before {
    content: "";
    position: absolute;
    left: 56px;
    top: -17px;
    width: 20px;
    height: 35px;
    border-left: 2px solid #d8d8d8;
    border-bottom: 2px solid #d8d8d8;
}

.twisty {
    position: absolute;
    left: 11px;
    top: 9px;
    width: 21px;
    height: 20px;
    border-radius: 2px;
    background: linear-gradient(#fff, #c8cadc);
}

.twisty::before {
    content: "";
    position: absolute;
    left: 5px;
    top: 9px;
    width: 10px;
    height: 2px;
    background: #000;
}

.twisty::after {
    content: "";
    position: absolute;
    left: 21px;
    top: 9px;
    width: 10px;
    height: 2px;
    background: #d8d8d8;
}

.val {
    padding-left: 4px;
}

.list-end {
    position: relative;
    height: 2px;
    background: #000;
}

.list-end-names {
    width: 288px;
    margin-left: 4px;
}

.list-end-vals {
    width: 187px;
    margin-left: 3px;
}

.end-mark {
    position: absolute;
    left: 0;
    top: -6px;
}

.wave {
    display: block;
    shape-rendering: crispEdges;
}

.trace {
    fill: none;
    stroke: #00ff00;
    stroke-width: 2;
}

.trace-bus {
    fill: none;
    stroke: #b8f5b8;
    stroke-width: 2;
}

.bus-label {
    font-size: 22px;
    fill: #f0f0f0;
}

.cursor {
    position: absolute;
    left: 621px;
    top: 4px;
    bottom: 0;
    width: 5px;
    background: #e8b800;
}

.watermark {
    position: absolute;
    right: 18px;
    bottom: 8px;
    font-family: "Liberation Sans", "Noto Sans CJK SC", sans-serif;
    font-size: 18.700px;
    line-height: 24px;
    color: #8e8e8e;
    white-space: nowrap;
}
```
